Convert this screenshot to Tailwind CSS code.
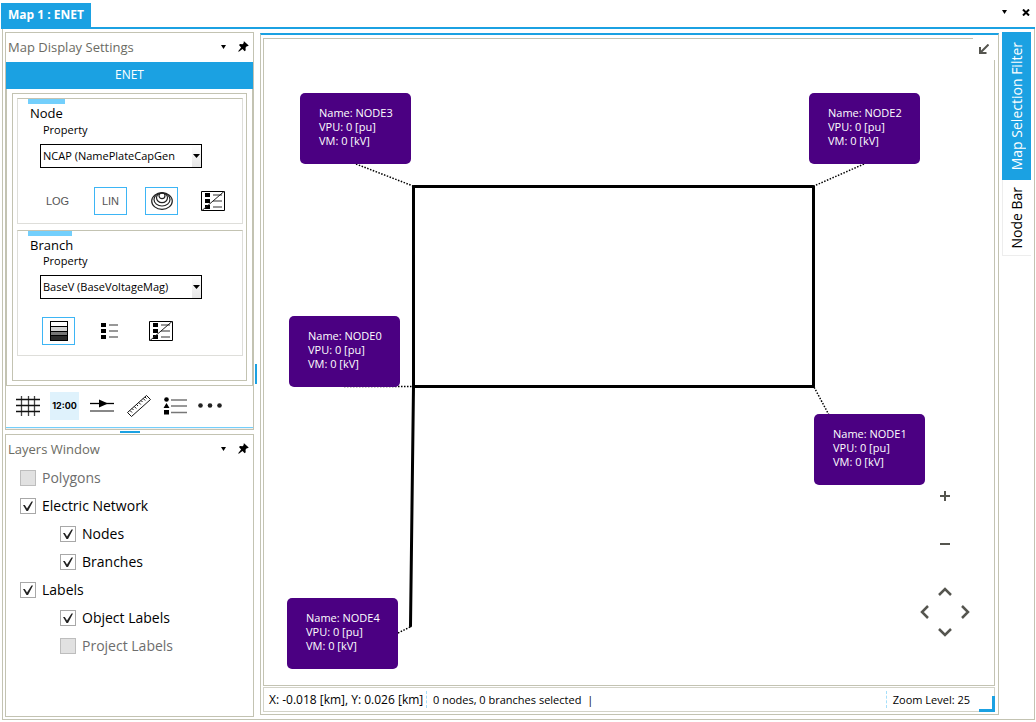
<!DOCTYPE html>
<html lang="en">
<head>
<meta charset="utf-8">
<title>Map 1 : ENET</title>
<script src="https://cdn.jsdelivr.net/npm/@tailwindcss/browser@4"></script>
</head>
<body class="flex h-screen flex-col overflow-hidden bg-white pb-[2px] font-['Open_Sans','Noto_Sans',sans-serif] text-[11px] leading-4 text-black">
<svg class="hidden" aria-hidden="true">
  <symbol id="pin" viewBox="0 0 11 11"><path d="M6 0.300L10.700 4.500L9.700 5.300L9 5L7.500 6.800L7.700 9.200L6.700 10.200L4.500 8L0.800 10.700L0.200 10.300L3.100 6.500L1 4.100L2.100 3L4.500 3.200L6 1.800L5.400 1.200Z" fill="#000"/></symbol>
  <symbol id="caret" viewBox="0 0 5 4"><path d="M0 0H5L2.500 4Z" fill="#000"/></symbol>
  <symbol id="check" viewBox="0 0 16 16"><path d="M3 7L4.800 7L7 10.500L11.500 3.500H13L8 13H6.500Z" fill="#222"/></symbol>
  <symbol id="list-off" viewBox="0 0 24 20"><path d="M0.500 0.500H23.500V19.500H0.500Z" fill="#fff" stroke="#000"/><path d="M12 4H21M12 10H21M12 16H21" stroke="#777" stroke-width="1.500"/><path d="M4 2H9V6H4ZM4 8H9V12H4ZM4 14H9V18H4Z" fill="#000"/><path d="M1 19.500L23 0.500" stroke="#222" stroke-width="1"/></symbol>
</svg>

<header class="flex h-[27px] shrink-0 items-end justify-between pl-px">
  <button class="h-6 bg-[#1ba1e2] px-[7px] text-[12px] font-bold text-white">Map 1 : ENET</button>
  <div class="flex h-full items-center gap-[15px] pr-[6px] pb-[3px]">
    <button aria-label="Window list"><svg class="h-1 w-[5px]"><use href="#caret"/></svg></button>
    <button aria-label="Close"><svg class="h-[7px] w-2" viewBox="0 0 8 7"><path d="M1 0.500L7 6.500M7 0.500L1 6.500" stroke="#000" stroke-width="2"/></svg></button>
  </div>
</header>
<div class="ml-px mr-px h-[2px] shrink-0 bg-[#1ba1e2]"></div>

<div class="mr-px ml-[2px] flex min-h-0 flex-1 border-x border-b border-[#c3c3b2] pt-[3px] pr-[3px] pl-[2px]">
  <aside class="flex w-[249px] shrink-0 flex-col pb-[2px]">
    <section class="flex flex-col border border-[#c3c3b2]">
      <div class="flex h-[29px] items-center justify-between pr-1 pb-[2px] pl-[2px] text-[#6b6b63]">
        <h2 class="text-[13px]">Map Display Settings</h2>
        <div class="flex items-center gap-3">
          <button aria-label="Panel menu"><svg class="h-1 w-[5px]"><use href="#caret"/></svg></button>
          <button aria-label="Pin panel"><svg class="size-[11px]"><use href="#pin"/></svg></button>
        </div>
      </div>
      <div class="h-[27px] bg-[#1ba1e2] text-center text-[12px] leading-[25px] text-white">ENET</div>
      <div class="border-x border-b border-[#c3c3b2] py-1 pr-[5px] pl-[5px]">
        <div class="flex flex-col gap-[6px] border border-[#c3c3b2] pt-1 pr-[3px] pb-6 pl-1">
          <fieldset class="h-[126px] border border-[#dededa] border-t-[#c3c3b2] pl-[10px]">
            <div class="h-[5px] w-[37px] bg-[#73cffc]"></div>
            <div class="pt-px pb-px pl-[2px] text-[13px]">Node</div>
            <label for="np" class="block pl-[15px]">Property</label>
            <div class="relative mt-[6px] ml-3 w-[162px]">
              <select id="np" class="block h-6 w-full appearance-none border border-black pl-[2px] text-[11px]"><option>NCAP (NamePlateCapGen</option></select>
              <span class="pointer-events-none absolute top-px right-px flex h-[22px] w-[9px] items-center justify-center bg-linear-to-b from-white to-[#e6e6e6]"><svg class="h-1 w-[7px]" viewBox="0 0 7 4"><path d="M0 0H7L3.500 4Z"/></svg></span>
            </div>
            <div class="mt-[19px] ml-[15px] flex items-center gap-[18px]">
              <button class="h-7 w-[33px] pr-1 font-['Liberation_Sans'] text-[11px] text-[#555]">LOG</button>
              <button class="h-7 w-[33px] border border-[#3db5f5] font-['Liberation_Sans'] text-[11px] text-[#555]">LIN</button>
              <button class="flex h-7 w-[33px] items-center justify-center border border-[#3db5f5]" aria-label="Contours"><svg class="h-[18px] w-[22px]" viewBox="0 0 22 18" fill="none" stroke="#222" stroke-width="1.200"><ellipse cx="11" cy="9" rx="10.300" ry="8.300"/><ellipse cx="11" cy="7.500" rx="8" ry="6.500"/><ellipse cx="11" cy="5.800" rx="5.500" ry="4.800"/><ellipse cx="11" cy="3.800" rx="3" ry="2.800"/></svg></button>
              <button class="flex h-7 w-[33px] items-center justify-center" aria-label="Hide node legend"><svg class="h-5 w-6"><use href="#list-off"/></svg></button>
            </div>
          </fieldset>
          <fieldset class="h-[126px] border border-[#dededa] border-t-[#c3c3b2] pl-[10px]">
            <div class="h-[5px] w-[44px] bg-[#73cffc]"></div>
            <div class="pt-px pl-[2px] text-[13px]">Branch</div>
            <label for="bp" class="block pl-[15px]">Property</label>
            <div class="relative mt-[6px] ml-3 w-[162px]">
              <select id="bp" class="block h-6 w-full appearance-none border border-black pl-[2px] text-[11px]"><option>BaseV (BaseVoltageMag)</option></select>
              <span class="pointer-events-none absolute top-px right-px flex h-[22px] w-[9px] items-center justify-center bg-linear-to-b from-white to-[#e6e6e6]"><svg class="h-1 w-[7px]" viewBox="0 0 7 4"><path d="M0 0H7L3.500 4Z"/></svg></span>
            </div>
            <div class="mt-[18px] ml-[14px] flex items-center gap-[18px]">
              <button class="flex h-7 w-[33px] items-center justify-center border border-[#3db5f5]" aria-label="Shading"><svg class="h-5 w-[18px]" viewBox="0 0 18 20"><path d="M0 0H18V20H0Z"/><path d="M1 1H17V5H1Z" fill="#fff"/><path d="M1 6H17V10H1Z" fill="#d4d4d4"/><path d="M1 11H17V14H1Z" fill="#777"/><path d="M1 15H17V19H1Z" fill="#2a2a2a"/></svg></button>
              <button class="flex h-7 w-[33px] items-center justify-center" aria-label="Legend"><svg class="h-4 w-[17px]" viewBox="0 0 17 16"><path d="M0 0H5V4H0ZM0 6H5V10H0ZM0 12H5V16H0Z"/><path d="M8 2H17M8 8H17M8 14H17" stroke="#777" stroke-width="1.500"/></svg></button>
              <button class="flex h-7 w-[33px] items-center justify-center" aria-label="Hide branch legend"><svg class="h-5 w-6"><use href="#list-off"/></svg></button>
            </div>
          </fieldset>
        </div>
      </div>
      <div class="flex h-[41px] items-center gap-[7px] pb-[2px] pl-[7px]">
        <button class="flex h-7 w-[30px] items-center justify-center" aria-label="Grid"><svg class="h-[22px] w-6" viewBox="0 0 24 22" stroke-width="1.300"><path d="M5.500 1V21M12.500 1V21M18.500 1V21" stroke="#444"/><path d="M0 4.500H24M0 10.500H24M0 16.500H24" stroke="#111"/></svg></button>
        <button class="h-7 w-[29px] bg-[#dff2fc] font-['Inter'] text-[9px] font-bold">12:00</button>
        <button class="flex h-7 w-8 items-center justify-center" aria-label="Flow arrows"><svg class="h-4 w-6" viewBox="0 0 24 16"><path d="M0 5.500H24" stroke="#000" stroke-width="1.300"/><path d="M9 1.500L18 5.500L9 9.500Z"/><path d="M0 13H24" stroke="#888" stroke-width="2"/></svg></button>
        <button class="flex h-7 w-7 items-center justify-center" aria-label="Measure"><svg class="size-6" viewBox="0 0 24 24" fill="none" stroke="#111"><path d="M19.500 1.500L23.500 5.500L4.500 22.500L0.500 18.500Z"/><path d="M3 16.500L5 18.500M5 14.500L6.500 16M7.300 12.500L9.300 14.500M9.500 10.500L11 12M11.800 8.500L13.800 10.500M14 6.500L15.500 8M16.200 4.500L18.200 6.500M18 3L19.500 4.500"/></svg></button>
        <button class="flex h-7 w-[30px] items-center justify-center" aria-label="Symbols"><svg class="h-[18px] w-6" viewBox="0 0 24 18"><circle cx="3.500" cy="2.500" r="2.300"/><path d="M3.500 6L6.500 11H0.500ZM1 13H6V17.500H1Z"/><path d="M8 3H24M8 9H24M8 15.500H24" stroke="#777" stroke-width="1.500"/></svg></button>
        <button class="flex h-7 w-[26px] items-center justify-center" aria-label="More"><svg class="h-[5px] w-6" viewBox="0 0 24 5" fill="#222"><circle cx="2.500" cy="2.500" r="2.300"/><circle cx="12" cy="2.500" r="2.300"/><circle cx="21.500" cy="2.500" r="2.300"/></svg></button>
      </div>
      <div class="h-px bg-[#73cffc]"></div>
      <div class="h-px bg-[#f0f0ee]"></div>
    </section>
    <div class="flex h-1 shrink-0 items-center justify-center"><div class="h-[2px] w-5 bg-[#1ba1e2]"></div></div>
    <section class="min-h-0 flex-1 border border-[#c3c3b2]">
      <div class="flex h-[29px] items-center justify-between pr-1 pb-[2px] pl-[2px] text-[#6b6b63]">
        <h2 class="text-[13px]">Layers Window</h2>
        <div class="flex items-center gap-3">
          <button aria-label="Panel menu"><svg class="h-1 w-[5px]"><use href="#caret"/></svg></button>
          <button aria-label="Pin panel"><svg class="size-[11px]"><use href="#pin"/></svg></button>
        </div>
      </div>
      <ul class="text-[14px]">
        <li class="pl-[14px]"><label class="flex h-7 items-center gap-[6px] text-[#6d6d6d]"><input type="checkbox" disabled class="size-4 appearance-none border border-[#bdbdbd] bg-[#e1e1e1]">Polygons</label></li>
        <li class="pl-[14px]"><label class="flex h-7 items-center gap-[6px]"><span class="grid size-4"><input type="checkbox" checked class="peer col-start-1 row-start-1 size-4 appearance-none border border-[#a8a8a8]"><svg class="pointer-events-none col-start-1 row-start-1 hidden size-4 peer-checked:block"><use href="#check"/></svg></span>Electric Network</label></li>
        <li class="pl-[54px]"><label class="flex h-7 items-center gap-[6px]"><span class="grid size-4"><input type="checkbox" checked class="peer col-start-1 row-start-1 size-4 appearance-none border border-[#a8a8a8]"><svg class="pointer-events-none col-start-1 row-start-1 hidden size-4 peer-checked:block"><use href="#check"/></svg></span>Nodes</label></li>
        <li class="pl-[54px]"><label class="flex h-7 items-center gap-[6px]"><span class="grid size-4"><input type="checkbox" checked class="peer col-start-1 row-start-1 size-4 appearance-none border border-[#a8a8a8]"><svg class="pointer-events-none col-start-1 row-start-1 hidden size-4 peer-checked:block"><use href="#check"/></svg></span>Branches</label></li>
        <li class="pl-[14px]"><label class="flex h-7 items-center gap-[6px]"><span class="grid size-4"><input type="checkbox" checked class="peer col-start-1 row-start-1 size-4 appearance-none border border-[#a8a8a8]"><svg class="pointer-events-none col-start-1 row-start-1 hidden size-4 peer-checked:block"><use href="#check"/></svg></span>Labels</label></li>
        <li class="pl-[54px]"><label class="flex h-7 items-center gap-[6px]"><span class="grid size-4"><input type="checkbox" checked class="peer col-start-1 row-start-1 size-4 appearance-none border border-[#a8a8a8]"><svg class="pointer-events-none col-start-1 row-start-1 hidden size-4 peer-checked:block"><use href="#check"/></svg></span>Object Labels</label></li>
        <li class="pl-[54px]"><label class="flex h-7 items-center gap-[6px] text-[#6d6d6d]"><input type="checkbox" disabled class="size-4 appearance-none border border-[#bdbdbd] bg-[#e1e1e1]">Project Labels</label></li>
      </ul>
    </section>
  </aside>

  <div class="flex w-[6px] shrink-0 items-center pb-1 pl-px"><div class="h-5 w-[2px] bg-[#1ba1e2]"></div></div>

  <main class="mt-px mb-1 flex min-w-0 flex-1 flex-col border-x border-t-2 border-b border-[#c3c3b2] border-t-[#1ba1e2] px-[2px] pt-[3px] pb-[2px]">
    <div class="relative mr-px min-h-0 flex-1 border border-[#c3c3b2]">
      <svg class="absolute inset-0 size-full" fill="none" stroke="#000">
        <path d="M92 125L149 147M600 125L550 147M80 347.500H149M565 376L550 348M134 594L146 588" stroke-width="1.500" stroke-dasharray="1.500 1.500"/>
        <path d="M146.500 587L149.500 347.500V147.500H549.500V347.500H149.500" stroke-width="3" stroke-linejoin="round" stroke-linecap="round"/>
      </svg>
      <div class="absolute top-[54px] left-9 h-[71px] w-[111px] rounded-[5px] bg-[#4b0082] pt-[13px] pl-[19px] leading-[14px] whitespace-nowrap text-white">Name: NODE3<br>VPU: 0 [pu]<br>VM: 0 [kV]</div>
      <div class="absolute top-[54px] left-[545px] h-[71px] w-[111px] rounded-[5px] bg-[#4b0082] pt-[13px] pl-[19px] leading-[14px] whitespace-nowrap text-white">Name: NODE2<br>VPU: 0 [pu]<br>VM: 0 [kV]</div>
      <div class="absolute top-[277px] left-[25px] h-[71px] w-[111px] rounded-[5px] bg-[#4b0082] pt-[13px] pl-[19px] leading-[14px] whitespace-nowrap text-white">Name: NODE0<br>VPU: 0 [pu]<br>VM: 0 [kV]</div>
      <div class="absolute top-[375px] left-[550px] h-[71px] w-[111px] rounded-[5px] bg-[#4b0082] pt-[13px] pl-[19px] leading-[14px] whitespace-nowrap text-white">Name: NODE1<br>VPU: 0 [pu]<br>VM: 0 [kV]</div>
      <div class="absolute top-[559px] left-[23px] h-[71px] w-[111px] rounded-[5px] bg-[#4b0082] pt-[13px] pl-[19px] leading-[14px] whitespace-nowrap text-white">Name: NODE4<br>VPU: 0 [pu]<br>VM: 0 [kV]</div>

      <button class="absolute -top-px -right-px flex size-[22px] items-center justify-center bg-white" aria-label="Collapse"><svg class="size-[10px]" viewBox="0 0 10 10" fill="none" stroke="#55554f" stroke-width="2"><path d="M9.500 0.500L2 8M1 3V9H7.500"/></svg></button>

      <div class="absolute right-6 bottom-12 flex w-[50px] flex-col items-center text-[#55554f]">
        <button class="flex size-5 items-center justify-center" aria-label="Zoom in"><svg class="size-[10px]" viewBox="0 0 10 10" stroke="currentColor" stroke-width="2"><path d="M0 5H10M5 0V10"/></svg></button>
        <button class="mt-7 flex size-5 items-center justify-center" aria-label="Zoom out"><svg class="size-[10px]" viewBox="0 0 10 10" stroke="currentColor" stroke-width="2"><path d="M0 5H10"/></svg></button>
        <button class="mt-[33px] flex h-[9px] w-[14px]" aria-label="Pan up"><svg class="h-[9px] w-[14px]" viewBox="0 0 14 9" fill="none" stroke="currentColor" stroke-width="2.500"><path d="M1 8L7 2L13 8"/></svg></button>
        <div class="my-[9px] flex w-full justify-between">
          <button aria-label="Pan left"><svg class="h-[14px] w-[9px]" viewBox="0 0 9 14" fill="none" stroke="currentColor" stroke-width="2.500"><path d="M8 1L2 7L8 13"/></svg></button>
          <button aria-label="Pan right"><svg class="h-[14px] w-[9px]" viewBox="0 0 9 14" fill="none" stroke="currentColor" stroke-width="2.500"><path d="M1 1L7 7L1 13"/></svg></button>
        </div>
        <button class="flex h-[9px] w-[14px]" aria-label="Pan down"><svg class="h-[9px] w-[14px]" viewBox="0 0 14 9" fill="none" stroke="currentColor" stroke-width="2.500"><path d="M1 1L7 7L13 1"/></svg></button>
      </div>
    </div>
    <footer class="relative mt-px mr-px flex h-[25px] shrink-0 items-center border border-[#d3d3c8] pl-[5px]">
      <span class="w-[157px] text-[12px] whitespace-nowrap">X: -0.018 [km], Y: 0.026 [km]</span>
      <span class="flex h-[17px] items-center gap-[6px] border-l border-dashed border-[#a5dffa] pl-[6px]">0 nodes, 0 branches selected <span>|</span></span>
      <span class="ml-auto flex h-[17px] items-center border-l border-dashed border-[#a5dffa] pr-6 pl-[6px]">Zoom Level: 25</span>
      <span class="absolute -right-px -bottom-px size-4 border-r-3 border-b-3 border-[#1ba1e2]"></span>
    </footer>
  </main>

  <nav class="ml-[3px] flex w-[29px] shrink-0 flex-col text-[14px]">
    <button class="flex h-[148px] items-center justify-center bg-[#1ba1e2] text-white"><span class="rotate-180 [writing-mode:vertical-rl]">Map Selection Filter</span></button>
    <button class="flex h-[76px] items-center justify-center border-b border-l border-[#ededed]"><span class="rotate-180 [writing-mode:vertical-rl]">Node Bar</span></button>
  </nav>
</div>
</body>
</html>
